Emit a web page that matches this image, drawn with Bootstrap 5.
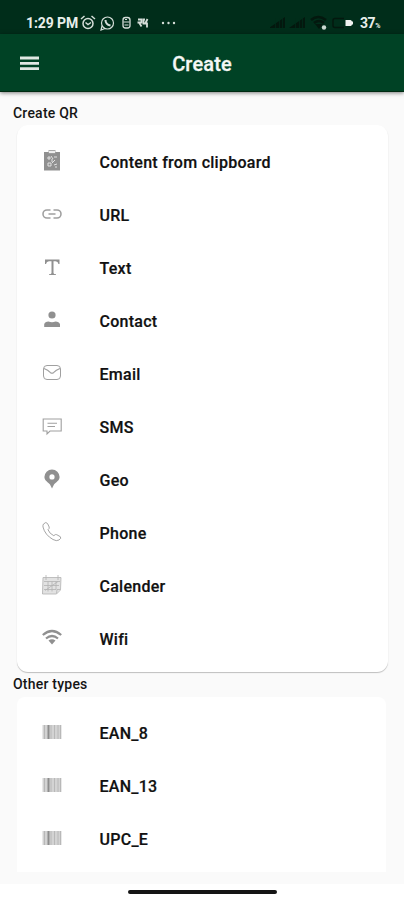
<!DOCTYPE html>
<html lang="en">
<head>
<meta charset="utf-8">
<meta name="viewport" content="width=device-width, initial-scale=1">
<title>Create</title>
<link href="https://cdn.jsdelivr.net/npm/bootstrap@5.3.0/dist/css/bootstrap.min.css" rel="stylesheet">
<style>
body{font-family:Roboto,"Liberation Sans",sans-serif;background:#fff;color:#151515;height:900px;overflow:hidden}
.status-strip{height:34px;background:#002d1a;color:#e9efeb;padding:11px 24px 0 26px}
.status-strip .clock{font-size:14px;font-weight:700;line-height:24px;width:53px;white-space:nowrap;letter-spacing:-.1px}
.status-strip .pct{font-size:14px;font-weight:700;line-height:24px;letter-spacing:-.4px;white-space:nowrap}
.status-strip .pct .unit{font-size:7px;line-height:1}
.status-strip svg{display:block}
.app-bar{height:58px;background:#004225;border-bottom:1px solid #002b12;box-shadow:0 1px 4px rgba(0,0,0,.5);z-index:1}
.app-bar .menu-icon{left:20px;top:22px}
.app-bar h1{font-size:20px;font-weight:500;color:#f4f7f5;-webkit-text-stroke:.3px #f4f7f5;letter-spacing:.15px;padding-top:2px}
.screen{height:792px;background:#fafafa}
.section-title{font-size:14px;font-weight:500;line-height:20px;height:25px;padding-left:13px;letter-spacing:.22px}
.section-title.first{height:33px;padding-top:11px}
.section-title.next{line-height:25px}
.type-card{height:547px;margin:0 16px 0 17px;padding-top:11px;background:#fff;border:0;border-radius:11px;box-shadow:0 1px 1px rgba(0,0,0,.24)}
.type-card.last{border-radius:8px 8px 0 0;box-shadow:none;height:175px;margin-right:18px;padding-top:10px}
.type-row{height:53px;padding:0 0 0 24px;font-size:16px;font-weight:500;letter-spacing:.27px;color:#111;background:none;-webkit-text-stroke:.2px #111}
.type-row svg{width:22px;height:22px;margin-right:36.500px;margin-top:-4px;color:#909090;flex:none}
.nav-handle{width:149px;height:4px;margin-top:6px;border-radius:2px;background:#151515}
</style>
<script src="https://cdn.jsdelivr.net/npm/bootstrap@5.3.0/dist/js/bootstrap.bundle.min.js"></script>
</head>
<body>
<div class="status-strip d-flex align-items-center">
  <span class="clock">1:29 PM</span>
  <svg width="100" height="18" viewBox="0 0 100 18" fill="none" stroke="#d5ded9" stroke-width="1.5">
    <circle cx="9" cy="9.500" r="5"/><path d="M2 5l3.500-3M16 5l-3.500-3M6.500 8.500l2.500 2 3-2"/>
    <circle cx="28.500" cy="9" r="6" stroke-width="1.200"/><path d="M23 12l-1 4 4-1.500" stroke-width="1.200"/><path d="M26.500 6q0 4.500 5 5.500" stroke-width="2"/>
    <rect x="44" y="3.500" width="7" height="10.500" rx="2.500" stroke-width="1.300"/><path d="M44.500 8h6M46 5.500h2M45.500 11h4" stroke-width="1.200"/>
    <path d="M59 5.500h3.500v3H60l2.500 4M66 5.500h-1.500v4H68v4M68.500 5l-2 4M58.500 8.500h3" stroke-width="1.800"/>
    <g fill="#d5ded9" stroke="none"><circle cx="84" cy="9" r="1.200"/><circle cx="89.500" cy="9" r="1.200"/><circle cx="95" cy="9" r="1.200"/></g>
  </svg>
  <svg class="ms-auto" width="86" height="18" viewBox="0 0 86 18">
    <path fill="#03180e" d="M-1 14L15 3v11zM19 14L35 3v11z"/>
    <path stroke="#002d1a" stroke-width=".7" d="M5.500 4v10M9.500 4v10M12.500 3v11M25.500 4v10M29.500 4v10M32.500 3v11"/>
    <path d="M41 6q7-6 15 0M44 9q5-4 10 0" fill="none" stroke="#03180e" stroke-width="2.600"/><path fill="#03180e" d="M45 10h8l-4 5z"/>
    <circle cx="54" cy="13.500" r="2.200" fill="#cbd9d1"/>
    <path d="M74 4.500H65q-2 0-2 2v5q0 2 2 2h9" fill="none" stroke="#03180e" stroke-width="1.500"/>
    <path fill="#f0f3f1" d="M75.500 6h5q1 0 1.500 1.500h1v3h-1q-.5 1.500-1.500 1.500h-5z"/>
  </svg>
  <span class="pct ms-1">37<span class="unit">%</span></span>
</div>
<header class="app-bar position-relative d-flex align-items-center justify-content-center">
  <svg class="menu-icon position-absolute" width="20" height="15" viewBox="0 0 20 15"><path stroke="#e0e8e3" stroke-width="2.800" d="M0 2h19M0 7.300h19M0 12.600h19"/></svg>
  <h1 class="mb-0">Create</h1>
</header>
<main class="screen">
  <h2 class="section-title first mb-0">Create QR</h2>
  <div class="type-card card list-group list-group-flush">
    <div class="type-row list-group-item border-0 d-flex align-items-center"><svg viewBox="0 0 22 22"><path fill="currentColor" d="M3 2h16v18.500H3z"/><path d="M7.500 0h7v3.500h-7z" fill="#aaa"/><path d="M8 1h6v2H8z" fill="#eee"/><path d="M7 7h2v2H7zM13 7h3M11 9v3M14 10l-3 3M7 13h3v3H7zM13 15l3-1M14 17h2M10 6l2 3" fill="none" stroke="#e2e2e2"/></svg>Content from clipboard</div>
    <div class="type-row list-group-item border-0 d-flex align-items-center"><svg viewBox="0 0 22 22"><path d="M9.500 7H6a4 4 0 0 0 0 8h3.500M12.500 7H16a4 4 0 0 1 0 8h-3.500M7.500 11h7" fill="none" stroke="#a0a0a0" stroke-width="1.600"/></svg>URL</div>
    <div class="type-row list-group-item border-0 d-flex align-items-center"><svg viewBox="0 0 22 22"><path fill="currentColor" d="M4 3.500h14.500V8h-1q-.5-2.700-3-2.700h-2V17q0 1.200 2.500 1.300v.7H8v-.7q2.500-.1 2.500-1.300V5.300H8Q5.500 5.300 5 8H4z"/></svg>Text</div>
    <div class="type-row list-group-item border-0 d-flex align-items-center"><svg viewBox="0 0 22 22"><g fill="currentColor"><circle cx="11" cy="6" r="3.600"/><path d="M3.200 18v-2.700Q4 12.500 7.500 12.500q3.500 1.300 7 0 3.500 0 4.500 2.800V18z"/></g></svg>Contact</div>
    <div class="type-row list-group-item border-0 d-flex align-items-center"><svg viewBox="0 0 22 22"><g fill="none" stroke="#a0a0a0"><rect x="2.500" y="3.500" width="17" height="14" rx="3.500"/><path d="M3 6.500q4 1.500 6.500 4.200 1.500 1 3 0Q15 8 19 6.500" stroke-width="1.200"/></g></svg>Email</div>
    <div class="type-row list-group-item border-0 d-flex align-items-center"><svg viewBox="0 0 22 22"><path d="M2.200 4h18v12H9l-3 3v-3H2.200zM6.500 8.200h9.500M6.500 11.500h7.500" fill="none" stroke="#a0a0a0" stroke-width="1.100"/></svg>SMS</div>
    <div class="type-row list-group-item border-0 d-flex align-items-center"><svg viewBox="0 0 22 22"><path fill="currentColor" fill-rule="evenodd" d="M11 1.500a7.600 7.600 0 0 1 7.600 7.600c0 3.600-4 5.500-5.600 7.400l-2 4-2-4c-1.600-1.900-5.600-3.800-5.600-7.400A7.600 7.600 0 0 1 11 1.500zm0 4.800a2.600 2.600 0 1 0 0 5.200 2.600 2.600 0 0 0 0-5.200z"/></svg>Geo</div>
    <div class="type-row list-group-item border-0 d-flex align-items-center"><svg viewBox="0 0 22 22"><path d="M2.500 3Q5 .3 6.500 2.500L8.200 6q.5 1.500-1.200 2.700 1.500 4 5.800 6 1.600-1.800 3-1l3.500 2q1.500 1.500-1.300 3.300-2.500 1.500-6-.5Q4 14 2 6q-.3-2 .5-3z" fill="none" stroke="#a5a5a5"/></svg>Phone</div>
    <div class="type-row list-group-item border-0 d-flex align-items-center"><svg viewBox="0 0 22 22"><path fill="#e2e2e2" d="M2 3.500h18l-.5 12-4 4.500H1z"/><path d="M5 1v5M17 1v5M2 3.500h18M2 3.500L1.500 20h14l4-4L20 3.500M3 7.500h16M3 11.500h15M3 15.500h12M7 7.500v10M11 7.500v10M15 7.500v8M4 16.500l13-9M15.500 19.500l.5-4h3" fill="none" stroke="#b2b2b2" stroke-width=".8"/></svg>Calender</div>
    <div class="type-row list-group-item border-0 d-flex align-items-center"><svg viewBox="0 0 22 22"><path d="M1.800 8q9.200-8 18.400 0M5 11.500q6-5 12 0" fill="none" stroke="currentColor" stroke-width="2.200"/><path fill="currentColor" d="M7.500 13.500q3.500-2.500 7 0L11 17.500z"/></svg>Wifi</div>
  </div>
  <h2 class="section-title next mb-0">Other types</h2>
  <div class="type-card last card list-group list-group-flush overflow-hidden">
    <div class="type-row list-group-item border-0 d-flex align-items-center"><svg viewBox="0 0 22 22"><path fill="#d3d3d3" d="M1.500 4h19v14h-19z"/><path d="M3.500 4v14M10 4v14M13.500 4v14M17 4v14M19.500 4v14" stroke="#b8b8b8"/><path d="M7.500 4v14" stroke="#8d8d8d" stroke-width="2"/></svg>EAN_8</div>
    <div class="type-row list-group-item border-0 d-flex align-items-center"><svg viewBox="0 0 22 22"><path fill="#d3d3d3" d="M1.500 4h19v14h-19z"/><path d="M3.500 4v14M10 4v14M13.500 4v14M17 4v14M19.500 4v14" stroke="#b8b8b8"/><path d="M7.500 4v14" stroke="#8d8d8d" stroke-width="2"/></svg>EAN_13</div>
    <div class="type-row list-group-item border-0 d-flex align-items-center"><svg viewBox="0 0 22 22"><path fill="#d3d3d3" d="M1.500 4h19v14h-19z"/><path d="M3.500 4v14M10 4v14M13.500 4v14M17 4v14M19.500 4v14" stroke="#b8b8b8"/><path d="M7.500 4v14" stroke="#8d8d8d" stroke-width="2"/></svg>UPC_E</div>
  </div>
</main>
<footer class="d-flex justify-content-center"><div class="nav-handle"></div></footer>
</body>
</html>
